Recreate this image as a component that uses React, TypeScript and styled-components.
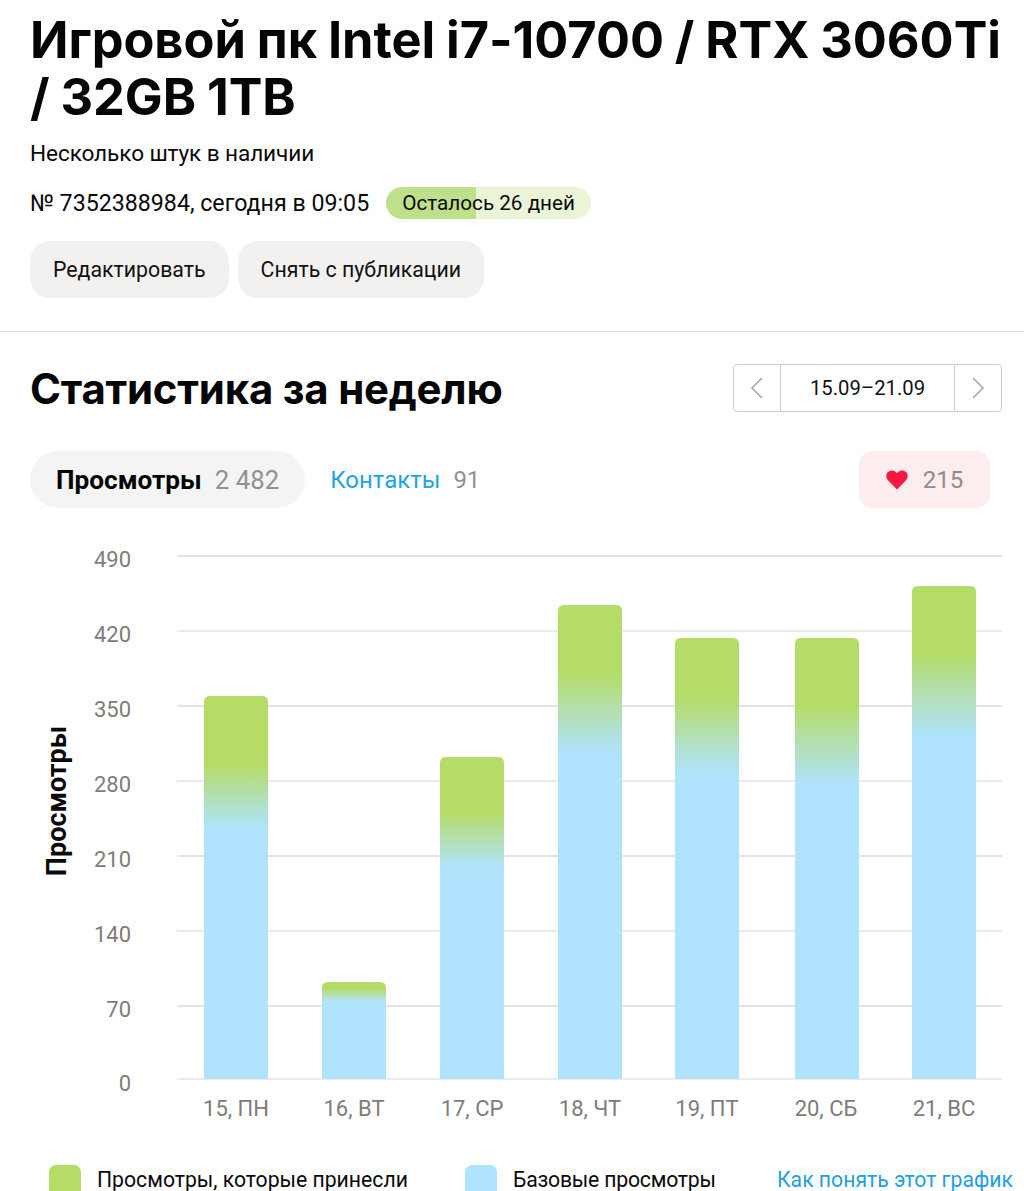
import React from "react";
import styled, { createGlobalStyle } from "styled-components";

const Global = createGlobalStyle`
  html, body { margin: 0; padding: 0; height: 1191px; overflow: hidden; background: #fff; }
  body { font-family: Roboto, "Liberation Sans", sans-serif; color: #0a0a0a; }
`;
const Page = styled.div`width: 1024px; height: 1191px; overflow: hidden;`;
const Header = styled.header`padding: 11px 22px 33px 30px; border-bottom: 1px solid #e3e3e3;`;
const Title = styled.h1`
  margin: 0; font: 700 50.5px/57px Inter, sans-serif; letter-spacing: -0.04px; word-spacing: -1px; color: #050505; white-space: nowrap;
`;
const Stock = styled.p`margin: 15px 0 0; font-size: 22.6px; line-height: 28px; letter-spacing: -0.1px;`;
const MetaRow = styled.div`display: flex; align-items: center; gap: 17px; margin-top: 19px;`;
const MetaText = styled.span`font-size: 23.2px; line-height: 32px;`;
const Days = styled.span`
  height: 32px; padding: 0 16px; border-radius: 16px; display: flex; align-items: center;
  font-size: 20.7px; background: linear-gradient(90deg, #bfe08a 0 44%, #e9f5d6 44% 100%);
`;
const Actions = styled.div`display: flex; gap: 9px; margin-top: 22px;`;
const ActionButton = styled.button`
  height: 57px; padding: 0 23px; border: 0; border-radius: 20px; background: #f2f1ef;
  font: 400 21.3px Roboto, sans-serif; color: #111;
`;
const Stats = styled.section`padding: 32px 22px 0 30px;`;
const StatsHead = styled.div`display: flex; justify-content: space-between; align-items: center;`;
const H2 = styled.h2`margin: 0; font: 700 41.9px/50px Inter, sans-serif; letter-spacing: -0.2px; color: #050505;`;
const Pager = styled.div`
  display: grid; grid-template-columns: 47px 173px 47px; height: 48px; box-sizing: border-box;
  border: 1px solid #cfcfcf; border-radius: 4px; margin-bottom: 2px;
`;
const PagerCell = styled.div<{ $divider?: "left" | "right" }>`
  display: flex; align-items: center; justify-content: center; font-size: 20.3px; color: #111;
  ${(p) => (p.$divider ? `border-${p.$divider}: 1px solid #cfcfcf;` : "")}
`;
const TabRow = styled.div`display: flex; align-items: center; margin-top: 37px; padding-right: 12px;`;
const ActiveTab = styled.div`
  height: 57px; padding: 0 26px; border-radius: 29px; background: #f4f4f4; display: flex;
  align-items: center; gap: 13px; font-size: 25.8px;
`;
const TabName = styled.b`font: 700 26.2px Roboto, sans-serif; color: #050505;`;
const TabCount = styled.span`color: #919191;`;
const PlainTab = styled.div`display: flex; align-items: center; gap: 13px; margin-left: 25px; font-size: 24px;`;
const BlueName = styled.span`color: #1ea3e8;`;
const Likes = styled.div`
  margin-left: auto; width: 131px; height: 57px; border-radius: 14px; background: #fdedee;
  display: flex; align-items: center; justify-content: center; gap: 15px; font-size: 24px; color: #948a8b;
`;
const ChartSvg = styled.svg`display: block; width: 1024px; height: 620px; margin: 19px 0 0 -30px;`;
const Tick = styled.text`font: 400 22px Roboto, sans-serif; fill: #807c7a;`;
const AxisName = styled.text`font: 700 27px Roboto, sans-serif; fill: #0a0a0a;`;
const Legend = styled.div`display: flex; align-items: flex-start; margin: 19px 0 0 19px; width: 965px;`;
const Key = styled.div<{ $w: number; $ls?: number }>`
  display: flex; gap: 16px; font-size: 21.2px; line-height: 28px; width: ${(p) => p.$w}px; letter-spacing: ${(p) => p.$ls ?? 0}px;
`;
const Swatch = styled.span<{ $c: string }>`width: 32px; height: 32px; border-radius: 7px; background: ${(p) => p.$c}; flex: none; margin-top: -1px;`;
const Help = styled.a`font-size: 21.2px; line-height: 28px; color: #1f9fe6; white-space: nowrap;`;

const top0 = 527;
const grid = [490, 420, 350, 280, 210, 140, 70, 0];
const lineY = [556, 631, 706, 781, 856, 931, 1006, 1079];
const bars = [
  { x: 204, top: 696, solid: 764, blue: 828, label: "15, ПН" },
  { x: 322, top: 982, solid: 988, blue: 1002, label: "16, ВТ" },
  { x: 440, top: 757, solid: 812, blue: 868, label: "17, СР" },
  { x: 558, top: 605, solid: 672, blue: 754, label: "18, ЧТ" },
  { x: 675, top: 638, solid: 696, blue: 774, label: "19, ПТ" },
  { x: 795, top: 638, solid: 704, blue: 786, label: "20, СБ" },
  { x: 912, top: 586, solid: 652, blue: 737, label: "21, ВС" },
];
const labelX = [236, 354, 472, 590, 707, 826, 944];

export default function App() {
  return (
    <Page>
      <Global />
      <Header>
        <Title>Игровой пк Intel i7-10700 / RTX 3060Ti<br />/ 32GB 1TB</Title>
        <Stock>Несколько штук в наличии</Stock>
        <MetaRow>
          <MetaText>№ 7352388984, сегодня в 09:05</MetaText>
          <Days>Осталось 26 дней</Days>
        </MetaRow>
        <Actions>
          <ActionButton>Редактировать</ActionButton>
          <ActionButton>Снять с публикации</ActionButton>
        </Actions>
      </Header>
      <Stats>
        <StatsHead>
          <H2>Статистика за неделю</H2>
          <Pager>
            <PagerCell $divider="right">
              <svg width="16" height="24" viewBox="0 0 16 24" fill="none" stroke="#a8a8a8" strokeWidth="1.6"><path d="M13 2 3 12l10 10" /></svg>
            </PagerCell>
            <PagerCell>15.09–21.09</PagerCell>
            <PagerCell $divider="left">
              <svg width="16" height="24" viewBox="0 0 16 24" fill="none" stroke="#a8a8a8" strokeWidth="1.6"><path d="m3 2 10 10L3 22" /></svg>
            </PagerCell>
          </Pager>
        </StatsHead>
        <TabRow>
          <ActiveTab><TabName>Просмотры</TabName><TabCount>2 482</TabCount></ActiveTab>
          <PlainTab><BlueName>Контакты</BlueName><TabCount>91</TabCount></PlainTab>
          <Likes>
            <svg width="22" height="20" viewBox="0 0 22 20"><path fill="#f5183f" d="M11 19.500 2.200 10.600C-.3 8-.2 4.200 2 2.100 4.300-.1 8-.1 10 2.100l1 1.100 1-1.100c2-2.200 5.700-2.200 8 0 2.200 2.100 2.300 5.900-.2 8.500z" /></svg>
            215
          </Likes>
        </TabRow>
        <ChartSvg viewBox={`0 ${top0} 1024 620`}>
          <defs>
            {bars.map((b, i) => (
              <linearGradient key={i} id={`bar${i}`} gradientUnits="userSpaceOnUse" x1="0" x2="0" y1={b.solid} y2={b.blue}>
                <stop offset="0" stopColor="#b5dc66" />
                <stop offset="1" stopColor="#b0e3fe" />
              </linearGradient>
            ))}
          </defs>
          {lineY.map((y, i) => (
            <g key={y}>
              <line x1="177" x2="1002" y1={y} y2={y} stroke="#e4e4e4" strokeWidth={i % 2 === 0 ? 2 : 1.3} />
              <Tick x="131" y={y + (i === 7 ? 12 : 11)} textAnchor="end">{grid[i]}</Tick>
            </g>
          ))}
          {bars.map((b, i) => (
            <path key={b.x} fill={`url(#bar${i})`} d={`M${b.x} 1079V${b.top + 6}q0-6 6-6h52q6 0 6 6V1079z`} />
          ))}
          {bars.map((b, i) => (
            <Tick key={b.label} x={labelX[i]} y="1116" textAnchor="middle">{b.label}</Tick>
          ))}
          <AxisName transform="translate(66 801) rotate(-90)" textAnchor="middle">Просмотры</AxisName>
        </ChartSvg>
        <Legend>
          <Key $w={416}><Swatch $c="#b5dc66" />Просмотры, которые принесли</Key>
          <Key $w={312} $ls={-0.2}><Swatch $c="#b0e3fe" />Базовые просмотры</Key>
          <Help>Как понять этот график</Help>
        </Legend>
      </Stats>
    </Page>
  );
}
